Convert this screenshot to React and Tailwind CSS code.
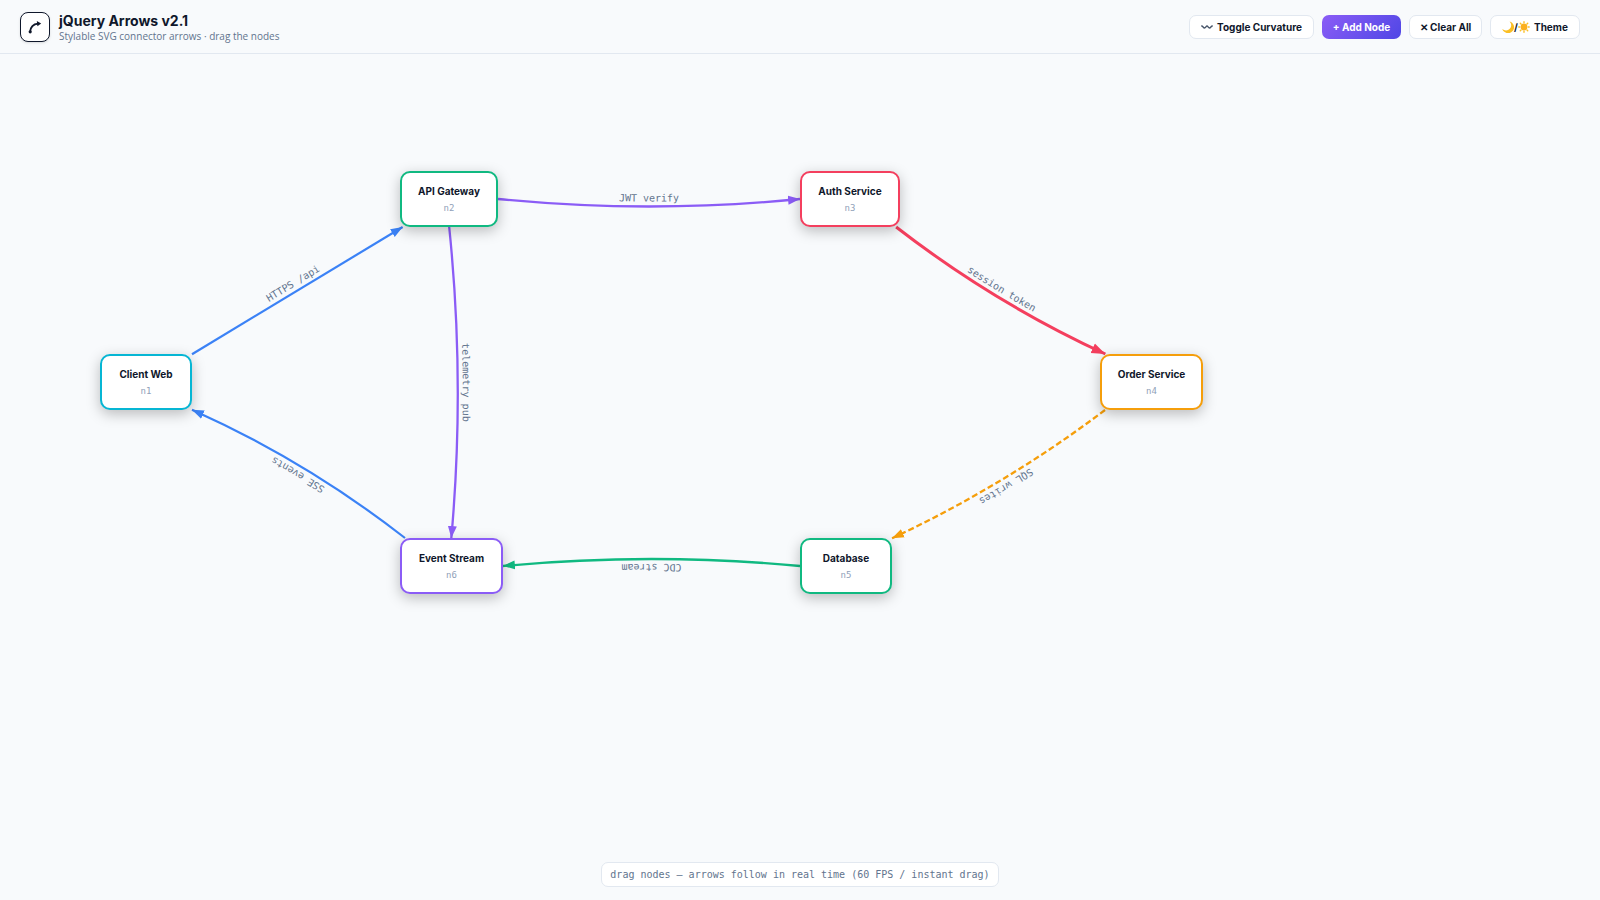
import React, { useRef, useState } from 'react';

const START_NODES = [
  { id: 'n1', label: 'Client Web', x: 100, y: 300, w: 92, border: 'border-[#06b6d4]' },
  { id: 'n2', label: 'API Gateway', x: 400, y: 117, w: 98, border: 'border-[#10b981]' },
  { id: 'n3', label: 'Auth Service', x: 800, y: 117, w: 100, border: 'border-[#f43f5e]' },
  { id: 'n4', label: 'Order Service', x: 1100, y: 300, w: 103, border: 'border-[#f59e0b]' },
  { id: 'n5', label: 'Database', x: 800, y: 484, w: 92, border: 'border-[#10b981]' },
  { id: 'n6', label: 'Event Stream', x: 400, y: 484, w: 103, border: 'border-[#8b5cf6]' },
];

const NODE_H = 56;

// bend is the distance of the control point from the straight line
const EDGES = [
  { id: 'e1', from: 'n1', to: 'n2', label: 'HTTPS /api', color: '#3b82f6', width: 2.2, bend: 0 },
  { id: 'e2', from: 'n2', to: 'n3', label: 'JWT verify', color: '#8b5cf6', width: 2.3, bend: 15 },
  { id: 'e3', from: 'n3', to: 'n4', label: 'session token', color: '#f43f5e', width: 3, bend: 14 },
  { id: 'e4', from: 'n2', to: 'n6', label: 'telemetry pub', color: '#8b5cf6', width: 2.3, bend: -15 },
  { id: 'e5', from: 'n4', to: 'n5', label: 'SQL writes', color: '#f59e0b', width: 2.3, bend: -13, dash: '6 3' },
  { id: 'e6', from: 'n5', to: 'n6', label: 'CDC stream', color: '#10b981', width: 2.3, bend: 14 },
  { id: 'e7', from: 'n6', to: 'n1', label: 'SSE events', color: '#3b82f6', width: 2.2, bend: 15 },
];

const center = (n) => ({ x: n.x + n.w / 2, y: n.y + NODE_H / 2 });

// where the line between two centers leaves the box of node n
function anchor(n, other) {
  const c = center(n);
  const o = center(other);
  const dx = o.x - c.x;
  const dy = o.y - c.y;
  if (!dx && !dy) return c;
  const t = Math.min((n.w / 2) / Math.abs(dx || 0.001), (NODE_H / 2) / Math.abs(dy || 0.001));
  return { x: c.x + dx * t, y: c.y + dy * t };
}

function edgePath(a, b, bend) {
  const p = anchor(a, b);
  const q = anchor(b, a);
  const dx = q.x - p.x;
  const dy = q.y - p.y;
  const len = Math.hypot(dx, dy) || 1;
  const cx = (p.x + q.x) / 2 - (dy / len) * bend;
  const cy = (p.y + q.y) / 2 + (dx / len) * bend;
  return `M ${p.x} ${p.y} Q ${cx} ${cy} ${q.x} ${q.y}`;
}

function Edge({ edge, nodes, curved }) {
  const a = nodes.find((n) => n.id === edge.from);
  const b = nodes.find((n) => n.id === edge.to);
  if (!a || !b) return null;
  const size = edge.width > 2.5 ? 14 : 12;
  return (
    <g>
      <marker id={`head-${edge.id}`} viewBox="0 0 12 10" refX="12" refY="5" markerWidth={size} markerHeight={size * 0.83} markerUnits="userSpaceOnUse" orient="auto">
        <path d="M0 0.5 L12 5 L0 9.5 Z" fill={edge.color} />
      </marker>
      <path
        id={edge.id}
        d={edgePath(a, b, curved ? edge.bend : 0)}
        fill="none"
        stroke={edge.color}
        strokeWidth={edge.width}
        strokeDasharray={edge.dash}
        markerEnd={`url(#head-${edge.id})`}
      />
      <text dy="-5" className="fill-slate-500 font-['DejaVu_Sans_Mono',monospace] text-[10px]">
        <textPath href={`#${edge.id}`} startOffset="50%" textAnchor="middle">{edge.label}</textPath>
      </text>
    </g>
  );
}

function Wave() {
  return (
    <svg viewBox="0 0 12 6" className="w-3 h-1.5" fill="none" stroke="#475569" strokeWidth="1.3" strokeLinecap="round">
      <path d="M0.7 2 C2 2 2.2 4 3.5 4 S5 2 6 2 S7.2 4 8.5 4 S10 2 11.3 2" />
    </svg>
  );
}

function Moon() {
  return (
    <svg viewBox="0 0 12 12" className="w-3 h-3">
      <path d="M7.6 0.4 A6 6 0 1 1 0.3 8 A5.2 5.2 0 0 0 7.6 0.4 Z" fill="#fbbf24" />
    </svg>
  );
}

function Sun() {
  return (
    <svg viewBox="0 0 12 12" className="w-3 h-3" stroke="#fbbf24" strokeWidth="1.4" strokeLinecap="round">
      <circle cx="6" cy="6" r="3.4" fill="#fbb01f" stroke="none" />
      <path d="M6 0.8 V1.7 M6 10.3 V11.2 M0.8 6 H1.7 M10.3 6 H11.2 M2.3 2.3 L3 3 M9 9 L9.7 9.7 M2.3 9.7 L3 9 M9 3 L9.7 2.3" />
    </svg>
  );
}

export default function App() {
  const [nodes, setNodes] = useState(START_NODES);
  const [curved, setCurved] = useState(true);
  const [dark, setDark] = useState(false);
  const drag = useRef(null);

  const startDrag = (e, n) => {
    e.currentTarget.setPointerCapture(e.pointerId);
    drag.current = { id: n.id, dx: e.clientX - n.x, dy: e.clientY - n.y };
  };

  const moveDrag = (e) => {
    const d = drag.current;
    if (!d) return;
    const x = e.clientX - d.dx;
    const y = e.clientY - d.dy;
    setNodes((list) => list.map((n) => (n.id === d.id ? { ...n, x, y } : n)));
  };

  const addNode = () => {
    setNodes((list) => [
      ...list,
      { id: `n${list.length + 1}`, label: 'New Node', x: 600, y: 300, w: 92, border: 'border-[#06b6d4]' },
    ]);
  };

  const button = 'h-6 flex items-center justify-center rounded-[7px] border border-slate-200 bg-white text-slate-900 text-[10px] font-bold whitespace-nowrap cursor-pointer';

  return (
    <div className={`min-h-screen flex flex-col overflow-hidden font-[Inter,sans-serif] ${dark ? 'bg-slate-900' : 'bg-[#f8fafc]'}`}>
      <header className="flex items-center justify-between px-5 pt-3 pb-[11px] border-b border-slate-200 bg-[#f8fafc]">
        <div className="flex items-center gap-[9px]">
          <div className="w-[30px] h-[30px] rounded-lg border border-slate-900 bg-white shadow-sm flex items-center justify-center">
            <svg viewBox="0 0 14 14" className="w-3.5 h-3.5" fill="none" stroke="#0f172a" strokeWidth="1.9">
              <path d="M2 12 C2.5 7 5.5 4 10 3.6" />
              <path d="M8.8 1 L13.2 3.4 L9.4 6.2 Z" fill="#0f172a" stroke="none" />
              <circle cx="2.2" cy="11.8" r="1.6" fill="#0f172a" stroke="none" />
            </svg>
          </div>
          <div>
            <h1 className="text-sm leading-[18px] font-bold text-slate-900">jQuery Arrows v2.1</h1>
            <p className="text-[10px] leading-3 text-slate-500 font-['Open_Sans',sans-serif]">Stylable SVG connector arrows · drag the nodes</p>
          </div>
        </div>
        <div className="flex items-center gap-2">
          <button className={`${button} min-w-[125px] gap-1`} onClick={() => setCurved(!curved)}>
            <Wave />
            Toggle Curvature
          </button>
          <button
            className="h-6 min-w-[79px] flex items-center justify-center rounded-[7px] bg-linear-135 from-[#8b5cf6] to-[#4f46e5] text-white text-[10px] font-bold whitespace-nowrap cursor-pointer"
            onClick={addNode}
          >
            + Add Node
          </button>
          <button className={`${button} min-w-[73px]`} onClick={() => setNodes([])}>✕ Clear All</button>
          <button className={`${button} min-w-[90px] gap-1`} onClick={() => setDark(!dark)}>
            <span className="flex items-center"><Moon />/<Sun /></span>
            Theme
          </button>
        </div>
      </header>

      <main className="relative flex-1">
        <svg className="absolute inset-0 w-full h-full">
          {EDGES.map((edge) => (
            <Edge key={edge.id} edge={edge} nodes={nodes} curved={curved} />
          ))}
        </svg>
        {nodes.map((n) => (
          <div
            key={n.id}
            className={`absolute h-14 flex flex-col items-center justify-center gap-1 rounded-[10px] border-2 bg-white shadow-[0_4px_14px_rgba(0,0,0,0.25)] cursor-grab select-none ${n.border}`}
            style={{ left: n.x, top: n.y, width: n.w }}
            onPointerDown={(e) => startDrag(e, n)}
            onPointerMove={moveDrag}
            onPointerUp={() => { drag.current = null; }}
          >
            <div className="text-[10px] leading-3.5 font-bold text-slate-900 whitespace-nowrap">{n.label}</div>
            <div className="text-[9px] leading-3 text-slate-400 font-['DejaVu_Sans_Mono',monospace]">{n.id}</div>
          </div>
        ))}
      </main>

      <footer className="flex justify-center pb-[13px]">
        <p className="h-[25px] px-2 flex items-center rounded-[7px] border border-slate-200 bg-white text-[10px] text-slate-500 font-['DejaVu_Sans_Mono',monospace]">
          drag nodes — arrows follow in real time (60 FPS / instant drag)
        </p>
      </footer>
    </div>
  );
}
